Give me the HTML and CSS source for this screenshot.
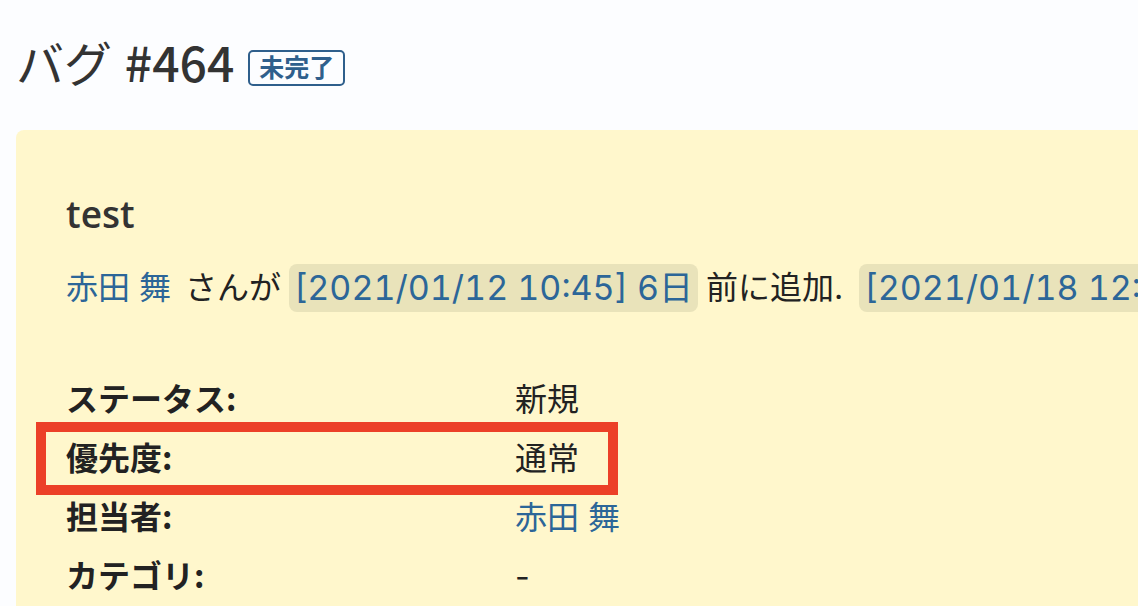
FILE: index.html
```html
<!DOCTYPE html>
<html lang="ja">
<head>
<meta charset="utf-8">
<title>バグ #464</title>
<link rel="stylesheet" href="styles.css">
</head>
<body>
<main class="page">
  <header class="heading">
    <h1 class="title"><span class="tracker">バグ</span> #464</h1>
    <span class="badge">未完了</span>
  </header>
  <article class="issue">
    <h2 class="subject">test</h2>
    <p class="author"><a class="user" href="#">赤田 舞</a><span>さんが</span><a class="time" href="#">[2021/01/12 10:45] 6日</a><span>前に追加.</span><a class="time updated" href="#">[2021/01/18 12:</a></p>
    <table class="attributes">
      <tbody>
        <tr><th scope="row">ステータス:</th><td>新規</td></tr>
        <tr class="marked"><th scope="row">優先度:</th><td>通常</td></tr>
        <tr><th scope="row">担当者:</th><td><a href="#">赤田 舞</a></td></tr>
        <tr><th scope="row">カテゴリ:</th><td>-</td></tr>
      </tbody>
    </table>
  </article>
</main>
</body>
</html>
```
FILE: styles.css
```css
*,
*::after {
  box-sizing: border-box;
}

body {
  margin: 0;
  background: #fcfdff;
  color: #222;
  font-family: Inter, "Noto Sans CJK JP", sans-serif;
  font-size: 32px;
  line-height: 48px;
  overflow: hidden;
}

a {
  color: #2c6698;
  text-decoration: none;
}

.page {
  display: flex;
  flex-direction: column;
  min-height: 100vh;
  padding-left: 16px;
}

.heading {
  display: flex;
  align-items: center;
  gap: 14px;
  height: 130px;
}

.title {
  margin: 0;
  padding-bottom: 8px;
  color: #333;
  font-family: "Noto Sans CJK JP", sans-serif;
  font-size: 48px;
  font-weight: 500;
}

.tracker {
  margin-right: 2px;
  font-weight: 400;
}

.badge {
  padding: 0 9px;
  margin-top: 6px;
  border: 2px solid #2f5f8c;
  border-radius: 5px;
  color: #2f5f8c;
  font-size: 25px;
  font-weight: 700;
  line-height: 32px;
}

.issue {
  flex: 1;
  padding: 60px 0 0 50px;
  border-radius: 8px 0 0 0;
  background: #fff7cc;
}

.subject {
  margin: 0;
  color: #333;
  font-family: "Open Sans", sans-serif;
  font-size: 37px;
  font-weight: 600;
}

.author {
  display: flex;
  gap: 8px;
  margin: 26px 0 58px;
  white-space: nowrap;
}

.user {
  margin-right: 6px;
}

.time {
  padding: 0 5px;
  border-radius: 8px;
  background: #e9e3ba;
  font-size: 34px;
  font-variant-numeric: tabular-nums;
}

.updated {
  margin-left: 8px;
}

.attributes {
  width: 100%;
  border-collapse: collapse;
  table-layout: fixed;
}

.attributes th,
.attributes td {
  height: 59px;
  padding: 0;
  text-align: left;
}

.attributes th {
  width: 449px;
  padding-bottom: 5px;
  font-family: "Noto Sans CJK JP", sans-serif;
  font-weight: 700;
}

.marked th {
  position: relative;
}

.marked th::after {
  content: "";
  position: absolute;
  top: -7px;
  left: -30px;
  width: 582px;
  height: 73px;
  border: 10px solid #ec4027;
}
```
